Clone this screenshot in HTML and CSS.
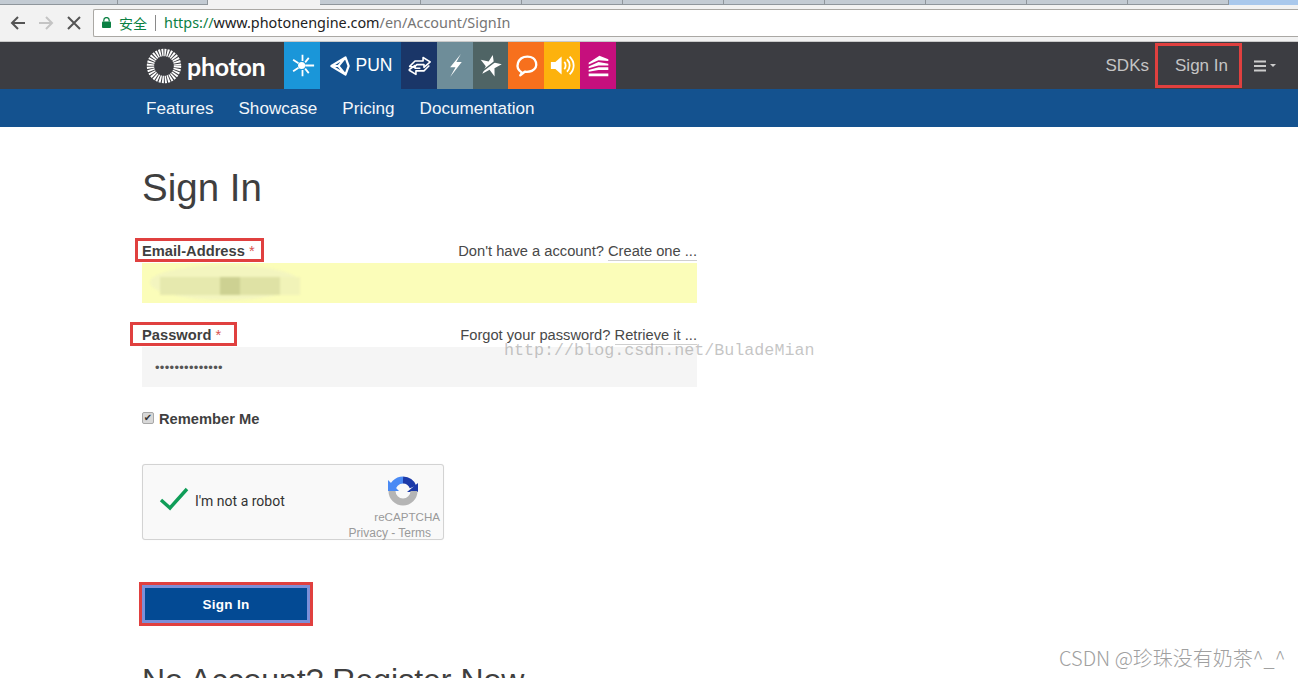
FILE: index.html
```html
<!DOCTYPE html>
<html lang="en" dir="ltr">
  <head>
    <meta name="viewport" content="width=device-width, initial-scale=1.0" />
    <meta charset="utf-8" />
    <title>Sign In</title>
    <link rel="stylesheet" href="styles.css">
  </head>

  <body>
    <div class="tabstrip">
      <div class="tab tab-first"></div>
      <div class="tab tab-second"></div>
      <div class="tab-active"></div>
      <div class="tab"></div>
      <div class="tab"></div>
      <div class="tab"></div>
      <div class="tab"></div>
      <div class="tab"></div>
      <div class="tab"></div>
      <div class="tab"></div>
      <div class="tab"></div>
      <div class="tab"></div>
      <div class="tab-rest"></div>
    </div>

    <div class="toolbar">
      <svg class="tool" viewBox="0 0 18 18"><path d="M16 9H3M9 3 3 9l6 6" fill="none" stroke="#555" stroke-width="2"/></svg>
      <svg class="tool" viewBox="0 0 18 18"><path d="M2 9h13M9 3l6 6-6 6" fill="none" stroke="#c4c4c4" stroke-width="2"/></svg>
      <svg class="tool" viewBox="0 0 18 18"><path d="M3 3l12 12M15 3 3 15" fill="none" stroke="#555" stroke-width="2"/></svg>
      <div class="address">
        <svg class="lock" viewBox="0 0 10 12"><path d="M2 5V3.500a3 3 0 0 1 6 0V5" fill="none" stroke="#0b8043" stroke-width="1.400"/><rect y="5" width="10" height="7" rx="1" fill="#0b8043"/></svg>
        <span class="secure">安全</span>
        <span class="address-sep"></span>
        <span class="url"><span class="url-scheme">https://</span><span class="url-host">www.photonengine.com</span>/en/Account/SignIn</span>
      </div>
    </div>

    <nav class="topnav">
      <svg class="logo-ring" viewBox="0 0 36 36">
        <circle cx="18" cy="18" r="13.500" fill="none" stroke="#fff" stroke-width="7.400" stroke-dasharray="1.700 0.950"/>
      </svg>
      <span class="logo-text">photon</span>
      <div class="products">
        <a class="product p-realtime">
          <svg viewBox="0 0 28 28"><g stroke="#fff" stroke-width="2" fill="none"><path d="M14 2v7M14 19v7M3.500 7.500l6 4M3.500 20.500l6-4M21 5.500l-4 5M21 22.500l-4-5M17 14h10"/></g><circle cx="13" cy="14" r="4" fill="#fff"/></svg>
        </a>
        <a class="product p-pun">
          <svg viewBox="0 0 28 28"><path d="M3 14 21 3l4 11-4 11zM12 14 21 3M12 14l9 11M3 14h9" fill="none" stroke="#fff" stroke-width="2.800" stroke-linejoin="round"/></svg>
          <span>PUN</span>
        </a>
        <a class="product p-server">
          <svg viewBox="0 0 28 28"><path d="M3 15l6-6h9V5l8 5-7 6v-3h-8l-3 3zM25 14l-6 6h-9v4l-8-5" fill="none" stroke="#fff" stroke-width="1.800" stroke-linejoin="round"/><path d="M2 19l7-5v3h6" fill="none" stroke="#fff" stroke-width="1.800" stroke-linejoin="round"/></svg>
        </a>
        <a class="product p-bolt">
          <svg viewBox="0 0 28 28"><path d="M20 1 8 16h6L8 27l13-17h-6z" fill="#fff"/></svg>
        </a>
        <a class="product p-star">
          <svg viewBox="0 0 28 28"><path d="M14 2l3 8h9l-7 6 2 9-7-6-7 6 2-9-7-6h9z" fill="#fff" transform="rotate(12 14 14)"/><path d="M4 21 21 8" stroke="#4f6465" stroke-width="1.600"/></svg>
        </a>
        <a class="product p-chat">
          <svg viewBox="0 0 28 28"><path d="M9 22c-9-5-5-18 6-18 11 0 13 12 5 16-3 1.500-6 1-8 1l-5 4z" fill="none" stroke="#fff" stroke-width="2.600" stroke-linejoin="round"/></svg>
        </a>
        <a class="product p-voice">
          <svg viewBox="0 0 28 28"><path d="M1 10h5l7-6v20l-7-6H1z" fill="#fff"/><path d="M16 10c2 2 2 6 0 8M19 7c4 4 4 10 0 14M22 4c6 6 6 14 0 20" fill="none" stroke="#fff" stroke-width="2"/></svg>
        </a>
        <a class="product p-stack">
          <svg viewBox="0 0 28 28"><path d="M3 11 15 3l10 4v2l-11-1-11 5zM3 15l11-5 11 2v2H14L3 17zM3 19l11-3h11v3H14L3 21zM3 23h22v3H3z" fill="#fff"/></svg>
        </a>
      </div>
      <a class="nav-link">SDKs</a>
      <a class="nav-link nav-signin">Sign In</a>
      <a class="nav-menu">
        <svg class="menu-bars" viewBox="0 0 13 12"><path d="M0 1.500h12M0 6h12M0 10.500h12" stroke="#ccc" stroke-width="2"/></svg>
        <span class="menu-caret"></span>
      </a>
    </nav>

    <div class="subnav">
      <a>Features</a>
      <a>Showcase</a>
      <a>Pricing</a>
      <a>Documentation</a>
    </div>

    <main class="content">
      <h1>Sign In</h1>

      <form class="signin-form">
        <div class="field-head">
          <label class="field-label">Email-Address <span class="req">*</span><span class="mark mark-email"></span></label>
          <span class="field-hint">Don't have a account? <a>Create one ...</a></span>
        </div>
        <div class="field-input filled">
          <div class="smudge">
            <i class="s1"></i><i class="s1"></i><i class="s1"></i><i class="s2"></i><i class="s3"></i><i class="s3"></i><i class="s0"></i>
          </div>
        </div>

        <div class="field-head second">
          <label class="field-label">Password <span class="req">*</span><span class="mark mark-password"></span></label>
          <span class="field-hint">Forgot your password? <a>Retrieve it ...</a></span>
        </div>
        <div class="field-input password">••••••••••••••</div>

        <label class="remember">
          <input type="checkbox" checked />
          Remember Me
        </label>

        <div class="captcha">
          <svg class="captcha-check" viewBox="0 0 30 24"><path d="M2 13l9 8L28 2" fill="none" stroke="#0f9d58" stroke-width="3.400"/></svg>
          <span class="captcha-text">I'm not a robot</span>
          <div class="captcha-side">
            <svg class="captcha-logo" viewBox="0 0 30 30">
              <path d="M4 15a11 11 0 0 1 11-11" fill="none" stroke="#4a8af4" stroke-width="7"/>
              <path d="M15 4a11 11 0 0 1 10 7" fill="none" stroke="#1c3aa9" stroke-width="7"/>
              <path d="M30 16H19l11-9z" fill="#1c3aa9"/>
              <path d="M0 15h11L0 4z" fill="#4a8af4"/>
              <path d="M26 15a11 11 0 0 1-22 0" fill="none" stroke="#b5b5b5" stroke-width="7"/>
            </svg>
            <span class="captcha-brand">reCAPTCHA</span>
            <span class="captcha-links">Privacy - Terms</span>
          </div>
        </div>

        <button type="button" class="submit">Sign In</button>
      </form>

      <h2>No Account? Register Now</h2>
    </main>

    <div class="watermark">http://blog.csdn.net/BuladeMian</div>
    <div class="credit">CSDN @珍珠没有奶茶^_^</div>
  </body>
</html>
```

FILE: styles.css
```css
* {
  box-sizing: border-box;
}

html,
body {
  height: 678px;
  overflow: hidden;
}

body {
  margin: 0;
  position: relative;
  font-family: "Liberation Sans", Arial, sans-serif;
  color: #3f3f3f;
  background: #fff;
}

/* browser chrome */
.tabstrip {
  display: flex;
  height: 5px;
  background: #f2f2f2;
}

.tab {
  width: 101px;
  background: #c3cbd3;
  border-right: 1px solid #8f969c;
  border-bottom: 1px solid #8f969c;
}

.tab-first {
  width: 118px;
}

.tab-second {
  width: 90px;
}

.tab-active {
  width: 112px;
}

.tab-rest {
  flex: 1;
  background: #a9c8ec;
}

.toolbar {
  display: flex;
  align-items: center;
  height: 37px;
  padding-left: 9px;
  background: #f2f2f2;
  border-bottom: 1px solid #c9c9c9;
}

.tool {
  width: 18px;
  height: 18px;
  margin-right: 10px;
  flex: none;
}

.address {
  display: flex;
  align-items: center;
  flex: 1;
  height: 28px;
  margin: 0 0 1px;
  padding-left: 8px;
  background: #fff;
  border: 1px solid #aaa8a4;
  border-right: 0;
  border-radius: 2px 0 0 2px;
}

.lock {
  width: 9px;
  height: 11px;
}

.secure {
  margin-left: 8px;
  font-family: "Noto Sans CJK SC", sans-serif;
  font-size: 14px;
  color: #0b8043;
}

.address-sep {
  width: 1px;
  height: 16px;
  margin: 0 8px;
  background: #8a8a8a;
}

.url {
  font-family: "Noto Sans", sans-serif;
  font-size: 14.400px;
  color: #757575;
}

.url-scheme {
  color: #0b8043;
}

.url-host {
  color: #222;
}

/* site header */
.topnav {
  display: flex;
  align-items: center;
  height: 47px;
  padding: 0 22px 0 146px;
  background: #3c3d42;
}

.logo-ring {
  width: 36px;
  height: 36px;
  flex: none;
}

.logo-text {
  width: 97px;
  margin-left: 5px;
  font-family: Lato, sans-serif;
  font-size: 25px;
  font-weight: 700;
  letter-spacing: -0.300px;
  color: #fff;
}

.products {
  display: flex;
  align-self: stretch;
  margin-right: auto;
}

.product {
  display: flex;
  align-items: center;
  justify-content: center;
  width: 36px;
  color: #fff;
}

.product svg {
  width: 25px;
  height: 25px;
  flex: none;
}

.p-realtime { background: #1a96d9; }
.p-pun { width: 81px; gap: 5px; background: #14528f; font-size: 17.500px; }
.p-pun svg { width: 22px; height: 22px; }
.p-server { background: #1a3668; }
.p-bolt { background: #6e8d99; }
.p-star { width: 35px; background: #4f6465; }
.p-chat { background: #f7701d; }
.p-voice { background: #fdb20d; }
.p-stack { background: #c60f7d; }

.nav-link {
  font-size: 17px;
  color: #c4c4c4;
}

.nav-signin {
  display: flex;
  align-items: center;
  justify-content: center;
  width: 87px;
  height: 45px;
  margin-left: 6px;
  padding-left: 6px;
  border: 3px solid #e0403f;
}

.nav-menu {
  display: flex;
  align-items: center;
  margin-left: 12px;
}

.menu-bars {
  width: 13px;
  height: 12px;
}

.menu-caret {
  width: 0;
  height: 0;
  margin-left: 3px;
  border: 3px solid transparent;
  border-top-color: #ccc;
  border-bottom: 0;
}

.subnav {
  display: flex;
  align-items: center;
  gap: 25px;
  height: 38px;
  padding: 1px 0 0 146px;
  background: #14528f;
  font-size: 17.100px;
  color: #f2f6fa;
}

/* sign in form */
.content {
  padding: 40px 0 0 142px;
}

h1 {
  margin: 0 0 31px;
  font-size: 38.500px;
  font-weight: 400;
  line-height: 42px;
}

.signin-form {
  width: 555px;
}

.field-head {
  display: flex;
  justify-content: space-between;
  align-items: baseline;
  height: 23px;
  padding-top: 3px;
  font-size: 14.700px;
}

.field-head.second {
  margin-top: 21px;
}

.field-label {
  position: relative;
  font-weight: 700;
}

.req {
  font-weight: 400;
  color: #d9534f;
}

.mark {
  position: absolute;
  border: 3px solid #e0403f;
}

.mark-email {
  top: -5px;
  left: -7px;
  width: 129px;
  height: 24px;
}

.mark-password {
  top: -5px;
  left: -12px;
  width: 107px;
  height: 24px;
}

.field-hint {
  color: #484848;
}

.field-hint a {
  padding-bottom: 1px;
  border-bottom: 1px solid #cfcfcf;
}

.field-input {
  height: 40px;
}

.filled {
  padding: 2px 0 0 8px;
  background: #fbfdb9;
}

.smudge {
  display: flex;
  align-items: flex-end;
  width: 150px;
  height: 35px;
  padding: 0 0 5px 10px;
  background: #f3f5bf;
  border-radius: 50%;
  filter: blur(1px);
}

.smudge i {
  flex: 1;
  height: 18px;
}

.s0 { background: #f1f3b8; }
.s1 { background: #e6e9ae; }
.s2 { background: #cdd192; }
.s3 { background: #dfe2a5; }

.password {
  padding: 1px 13px 0;
  background: #f5f5f5;
  font-size: 13px;
  line-height: 39px;
  letter-spacing: 0.300px;
  color: #555;
}

.remember {
  display: flex;
  align-items: center;
  gap: 5px;
  height: 22px;
  margin-top: 21px;
  font-size: 14.700px;
  font-weight: 700;
}

.remember input {
  appearance: none;
  display: flex;
  align-items: center;
  justify-content: center;
  width: 12px;
  height: 12px;
  margin: -3px 0 0;
  background: #d8d8d8;
  border: 1px solid #a8a8a8;
  border-radius: 2px;
}

.remember input::before {
  content: "✔";
  font-family: "DejaVu Sans", sans-serif;
  font-size: 10px;
  line-height: 1;
  color: #333;
}

.captcha {
  display: flex;
  align-items: center;
  width: 302px;
  height: 76px;
  margin-top: 34px;
  padding: 0 3px 0 16px;
  background: #f9f9f9;
  border: 1px solid #d3d3d3;
  border-radius: 3px;
  box-shadow: 0 0 1px rgba(0, 0, 0, 0.1);
}

.captcha-check {
  width: 30px;
  height: 24px;
  margin-top: -7px;
  flex: none;
}

.captcha-text {
  margin: -3px 0 0 6px;
  font-family: Roboto, sans-serif;
  font-size: 14px;
  color: #333;
}

.captcha-side {
  display: flex;
  flex-direction: column;
  align-items: flex-end;
  align-self: flex-end;
  margin: 0 0 -2px auto;
  font-size: 12px;
  line-height: 16px;
  color: #9a9a9a;
}

.captcha-logo {
  width: 30px;
  height: 30px;
  margin: 0 22px 3px 0;
}

.captcha-brand {
  font-size: 11.600px;
}

.captcha-links {
  margin-right: 9px;
}

.submit {
  display: block;
  width: 168px;
  height: 38px;
  margin-top: 45px;
  padding: 1px 0 0;
  background: #034a94;
  border: 3px solid #7c8fd8;
  outline: 3px solid #e0403f;
  font-family: "Liberation Sans", Arial, sans-serif;
  font-size: 13.500px;
  font-weight: 700;
  letter-spacing: 0.300px;
  color: #fff;
}

h2 {
  margin: 39px 0 0;
  font-size: 32px;
  font-weight: 400;
  line-height: 36px;
}

/* image stamps over the screenshot */
.watermark {
  position: absolute;
  top: 343px;
  left: 504px;
  font-family: "Liberation Mono", monospace;
  font-size: 16.700px;
  line-height: 15px;
  color: rgba(140, 140, 140, 0.5);
}

.credit {
  position: absolute;
  top: 645px;
  left: 1059px;
  font-family: "Noto Sans CJK SC", "Liberation Sans", sans-serif;
  font-size: 20px;
  font-weight: 300;
  line-height: 26px;
  color: #a0a0a0;
  white-space: nowrap;
}
```
